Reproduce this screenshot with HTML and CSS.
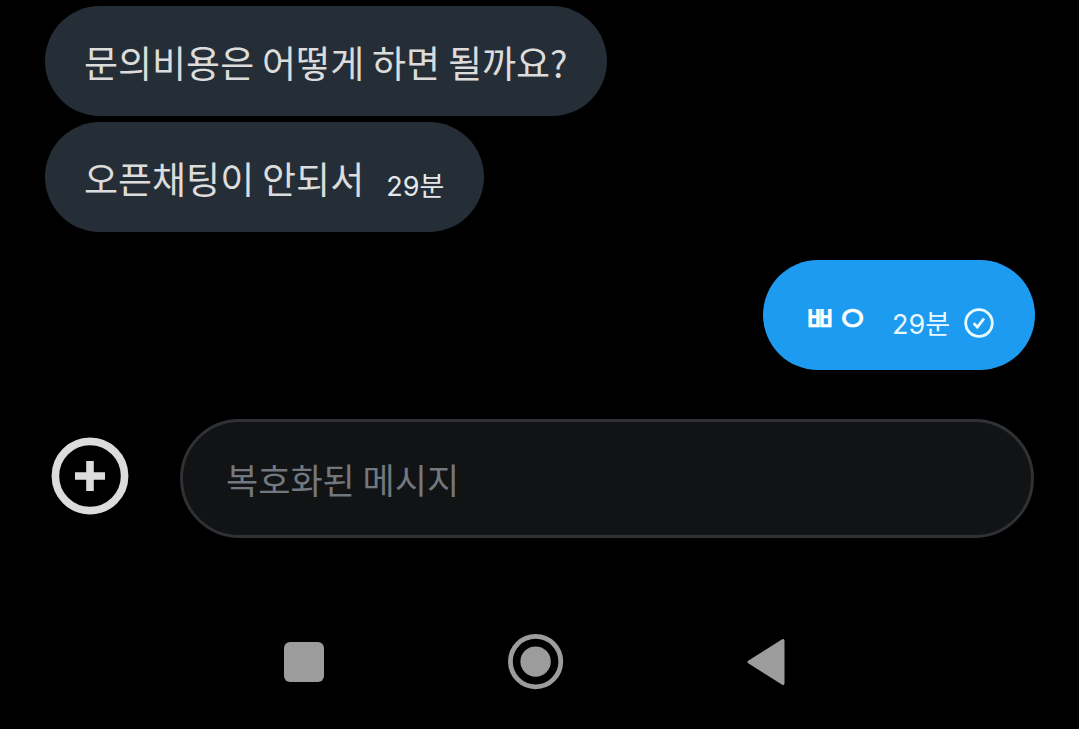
FILE: index.html
```html
<!DOCTYPE html>
<html lang="ko">
<head>
<meta charset="utf-8">
<title>메시지</title>
<link rel="stylesheet" href="styles.css">
</head>
<body>
<main class="chat">
  <div class="bubble bubble-in first"><span class="text">문의비용은 어떻게 하면 될까요?</span></div>
  <div class="bubble bubble-in second"><span class="text">오픈채팅이 안되서</span><span class="time">29분</span></div>
  <div class="bubble bubble-out"><span class="reply">ㅃㅇ</span><span class="time">29분</span>
    <svg class="check" viewBox="0 0 30 30"><circle cx="15" cy="15" r="13.3"/><path d="M9.7 15.3l3.7 3.9 6.6-8.7"/></svg>
  </div>
</main>
<form class="composer">
  <svg class="add" viewBox="0 0 78 78"><circle cx="39" cy="39" r="34.6"/><path d="M39 24v30M24 39h30"/></svg>
  <div class="field">복호화된 메시지</div>
</form>
<nav class="nav">
  <span class="recent"></span>
  <svg class="home" viewBox="0 0 56 56"><circle class="ring" cx="27.6" cy="27.6" r="25.2"/><circle class="dot" cx="27.6" cy="27.6" r="15.2"/></svg>
  <svg class="back" viewBox="0 0 40 48"><path d="M37 2.5v43L3 24z"/></svg>
</nav>
</body>
</html>
```
FILE: styles.css
```css
* { box-sizing: border-box; }
body {
  margin: 0;
  width: 1079px;
  height: 729px;
  overflow: hidden;
  background: #000;
  font-family: "Noto Sans CJK KR", sans-serif;
}
svg { display: block; flex: none; }
.chat {
  display: flex;
  flex-direction: column;
  align-items: flex-start;
  padding: 6px 44px 0 45px;
}
.bubble {
  display: flex;
  align-items: center;
  height: 110px;
  border-radius: 55px;
  padding-left: 39px;
  white-space: nowrap;
}
.bubble-in { background: #252e36; color: #dcdcdc; }
.first { width: 562px; }
.second { width: 439px; margin-top: 6px; }
.text { font-size: 37px; line-height: 54px; word-spacing: -2.5px; padding-top: 2px; }
.time { font-family: Inter, "Noto Sans CJK KR", sans-serif; font-size: 27px; line-height: 40px; }
.second .time { margin: 19px 0 0 22px; color: #e4e8ec; }
.bubble-out {
  align-self: flex-end;
  width: 272px;
  margin-top: 28px;
  padding-left: 40px;
  background: #1d9bf0;
  color: #fff;
}
.reply { font-size: 36px; width: 89px; padding-top: 1px; -webkit-text-stroke: 0.6px #fff; }
.bubble-out .time { margin-top: 19px; width: 72px; color: #e9f8ff; }
.check { width: 30px; height: 30px; margin-top: 16px; fill: none; stroke: #e9fbff; stroke-width: 2.8; }
.composer {
  display: flex;
  margin-top: 49px;
  padding-left: 51px;
}
.add { width: 78px; height: 78px; margin: 18px 51px 0 0; fill: none; stroke: #dcdcdc; stroke-width: 7.6; }
.field {
  width: 854px;
  height: 119px;
  border: 3px solid #2f3134;
  border-radius: 60px;
  padding: 31px 0 0 43px;
  background: #121315;
  color: #71787f;
  font-size: 35px;
  line-height: 52px;
  word-spacing: -2px;
}
.nav {
  display: flex;
  align-items: center;
  height: 56px;
  margin-top: 96px;
  padding-left: 284px;
}
.recent { width: 40px; height: 40px; border-radius: 6px; background: #9c9c9c; }
.home { width: 56px; height: 56px; margin-left: 184px; }
.ring { fill: none; stroke: #9c9c9c; stroke-width: 4.8; }
.dot { fill: #9c9c9c; }
.back { width: 40px; height: 48px; margin-left: 182px; fill: #9c9c9c; stroke: #9c9c9c; stroke-width: 3; stroke-linejoin: round; }
```
